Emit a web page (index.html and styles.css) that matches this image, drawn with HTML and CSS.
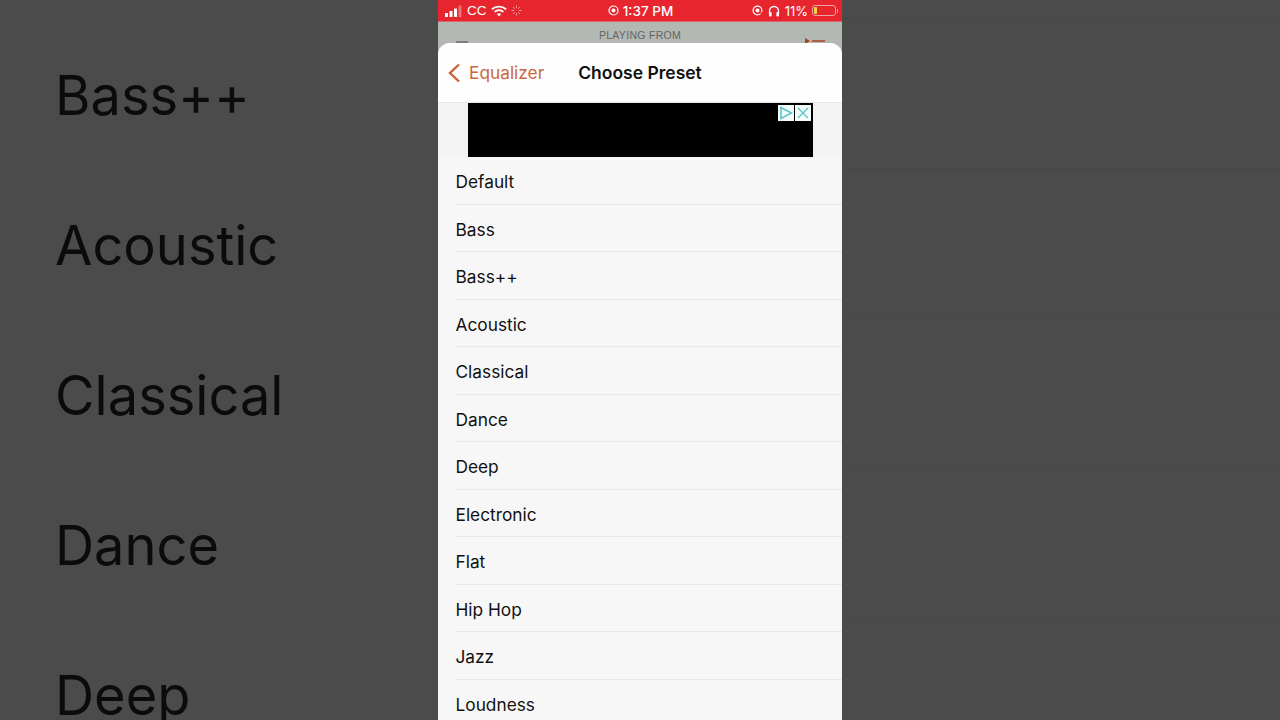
FILE: index.html
```html
<!DOCTYPE html>
<html lang="en">
<head>
    <meta charset="UTF-8">
    <meta name="viewport" content="width=device-width, initial-scale=1.0">
    <title>Choose Preset</title>
    <link rel="stylesheet" href="styles.css">
</head>
<body>
    <div class="stage">
        <!-- Zoomed copy of the list on the left -->
        <div class="side side-left">
            <div class="side-row">Bass++</div>
            <div class="side-row">Acoustic</div>
            <div class="side-row">Classical</div>
            <div class="side-row">Dance</div>
            <div class="side-row">Deep</div>
        </div>

        <div class="phone">
            <div class="status-bar">
                <div class="status-left">
                    <svg class="signal" width="20" height="12" viewBox="0 0 20 12">
                        <rect x="0" y="8" width="3" height="4" rx="0.5" fill="#fff"/>
                        <rect x="4.5" y="6" width="3" height="6" rx="0.5" fill="#fff"/>
                        <rect x="9" y="3.5" width="3" height="8.5" rx="0.5" fill="#fff"/>
                        <rect x="13.5" y="0.5" width="3" height="11.5" rx="0.5" fill="#fff" opacity="0.35"/>
                    </svg>
                    <span class="carrier">CC</span>
                    <svg class="wifi" width="16" height="12" viewBox="0 0 17 12">
                        <path d="M1 4.2 C5.2 0.4 11.8 0.4 16 4.2" fill="none" stroke="#fff" stroke-width="2"/>
                        <path d="M3.8 6.9 C6.5 4.6 10.5 4.6 13.2 6.9" fill="none" stroke="#fff" stroke-width="2"/>
                        <path d="M6.2 9.3 C7.6 8.2 9.4 8.2 10.8 9.3 L8.5 11.8 Z" fill="#fff"/>
                    </svg>
                    <svg class="spinner" width="11" height="11" viewBox="0 0 11 11" stroke="#fff" stroke-width="1" opacity="0.55">
                        <path d="M5.5 0.5V3M5.5 8V10.5M0.5 5.5H3M8 5.5H10.5M2 2L3.7 3.7M7.3 7.3L9 9M2 9L3.7 7.3M7.3 3.7L9 2"/>
                    </svg>
                </div>
                <div class="status-time">
                    <svg width="11" height="11" viewBox="0 0 11 11">
                        <circle cx="5.5" cy="5.5" r="4.5" fill="none" stroke="#fff" stroke-width="1.2"/>
                        <circle cx="5.5" cy="5.5" r="2" fill="#fff"/>
                    </svg>
                    <span>1:37 PM</span>
                </div>
                <div class="status-right">
                    <svg width="11" height="11" viewBox="0 0 11 11">
                        <circle cx="5.5" cy="5.5" r="4.4" fill="none" stroke="#fff" stroke-width="1.2"/>
                        <circle cx="5.5" cy="5.5" r="2" fill="#fff"/>
                        <path d="M8 8.2 L10.8 6.8 L10.8 10 Z" fill="#e6252f"/>
                    </svg>
                    <svg width="12" height="12" viewBox="0 0 12 12">
                        <path d="M1.5 8 V6 A4.5 4.5 0 0 1 10.5 6 V8" fill="none" stroke="#fff" stroke-width="1.4"/>
                        <rect x="1" y="7" width="2.6" height="4.5" rx="1" fill="#fff"/>
                        <rect x="8.4" y="7" width="2.6" height="4.5" rx="1" fill="#fff"/>
                    </svg>
                    <span class="battery-text">11%</span>
                    <div class="battery"><div class="battery-level"></div></div>
                    <div class="battery-tip"></div>
                </div>
            </div>

            <div class="now-playing">
                <span class="now-playing-label">PLAYING FROM</span>
                <span class="back-hint"></span>
                <svg class="queue-icon" width="22" height="12" viewBox="0 0 22 12">
                    <path d="M1 1 L6 4 L1 7 Z" fill="#a8431f"/>
                    <path d="M8 4 H21 M1 10 H21" stroke="#a8431f" stroke-width="1.5"/>
                </svg>
            </div>

            <div class="sheet">
                <div class="sheet-header">
                    <a class="back-link">
                        <svg width="14" height="20" viewBox="0 0 14 20">
                            <path d="M12 1.5 L3 10 L12 18.5" fill="none" stroke="#c8623a" stroke-width="2.4"/>
                        </svg>
                        <span>Equalizer</span>
                    </a>
                    <div class="sheet-title">Choose Preset</div>
                </div>

                <div class="ad-band">
                    <div class="ad">
                        <div class="ad-btn">
                            <svg width="14" height="14" viewBox="0 0 14 14">
                                <path d="M2 1.5 L12.5 7 L2 12.5 Z" fill="none" stroke="#5cc5c8" stroke-width="1.6"/>
                            </svg>
                        </div>
                        <div class="ad-btn">
                            <svg width="14" height="14" viewBox="0 0 14 14">
                                <path d="M2 2 L12 12 M12 2 L2 12" stroke="#5cc5c8" stroke-width="1.4"/>
                            </svg>
                        </div>
                    </div>
                </div>

                <div class="preset-list">
                    <div class="preset-row">Default</div>
                    <div class="preset-row">Bass</div>
                    <div class="preset-row">Bass++</div>
                    <div class="preset-row">Acoustic</div>
                    <div class="preset-row">Classical</div>
                    <div class="preset-row">Dance</div>
                    <div class="preset-row">Deep</div>
                    <div class="preset-row">Electronic</div>
                    <div class="preset-row">Flat</div>
                    <div class="preset-row">Hip Hop</div>
                    <div class="preset-row">Jazz</div>
                    <div class="preset-row">Loudness</div>
                </div>
            </div>
        </div>

        <div class="side side-right">
            <div class="side-line"></div>
            <div class="side-line"></div>
            <div class="side-line"></div>
            <div class="side-line"></div>
            <div class="side-line"></div>
        </div>
    </div>
</body>
</html>
```

FILE: styles.css
```css
html, body {
    margin: 0;
    padding: 0;
    height: 100%;
    overflow: hidden;
}
body {
    font-family: Inter, "Liberation Sans", Arial, sans-serif;
    background-color: #4b4b4b;
    color: #111;
}
.stage {
    display: flex;
    width: 1280px;
    height: 720px;
    overflow: hidden;
}

/* Dimmed side panels */
.side {
    width: 438px;
    flex-shrink: 0;
    box-sizing: border-box;
    background-color: #4b4b4b;
    overflow: hidden;
}
.side-left {
    padding-top: 15px;
    padding-left: 55px;
}
.side-row {
    height: 150px;
    box-sizing: border-box;
    line-height: 160px;
    font-size: 54.2px;
    color: #0b0b0b;
    filter: blur(0.6px);
    border-bottom: 1px solid #494949;
}
.side-right {
    padding-top: 18px;
}
.side-line {
    height: 150px;
    box-sizing: border-box;
    border-top: 1px solid #474747;
}

/* Phone column */
.phone {
    width: 404px;
    flex-shrink: 0;
    height: 720px;
    display: flex;
    flex-direction: column;
    background-color: #b4b8b3;
    overflow: hidden;
}
.status-bar {
    height: 22px;
    flex-shrink: 0;
    background-color: #e6252f;
    color: #fff;
    display: grid;
    grid-template-columns: 1fr auto 1fr;
    align-items: center;
    font-size: 13px;
    padding: 0 0 0 7px;
    box-sizing: border-box;
    border-bottom: 1px solid #d8636a;
}
.status-left {
    display: flex;
    align-items: center;
    font-family: "Liberation Sans", Arial, sans-serif;
}
.carrier {
    margin-left: 2px;
    margin-right: 4px;
    font-size: 13.5px;
}
.spinner {
    margin-left: 4px;
}
.status-time {
    display: flex;
    align-items: center;
    gap: 4px;
    margin-right: 6px;
    font-weight: 500;
    font-size: 13.5px;
}
.status-right {
    display: flex;
    align-items: center;
    justify-content: flex-end;
    gap: 5px;
    padding-right: 4px;
    font-size: 13px;
}
.battery {
    width: 20px;
    height: 7px;
    margin-left: -1px;
    border: 1px solid #f0a0a0;
    border-radius: 3px;
    padding: 1px;
}
.battery-level {
    width: 3px;
    height: 7px;
    background-color: #f6d43c;
    border-radius: 1px;
}
.battery-tip {
    width: 1px;
    height: 4px;
    margin-left: -4px;
    background-color: #f0a0a0;
}
.now-playing {
    height: 21px;
    flex-shrink: 0;
    position: relative;
    text-align: center;
    overflow: hidden;
}
.now-playing-label {
    display: block;
    font-family: "Liberation Sans", Arial, sans-serif;
    font-size: 10.5px;
    line-height: 27px;
    letter-spacing: 0.3px;
    color: #626664;
}
.queue-icon {
    position: absolute;
    right: 16px;
    top: 15px;
}
.back-hint {
    position: absolute;
    left: 18px;
    top: 19px;
    width: 12px;
    height: 2px;
    background-color: #7c7e7c;
}

/* Sheet */
.sheet {
    flex: 1;
    min-height: 0;
    background-color: #f7f7f7;
    border-radius: 12px 12px 0 0;
    overflow: hidden;
}
.sheet-header {
    height: 60px;
    background-color: #fefefe;
    position: relative;
    display: flex;
    align-items: center;
    justify-content: center;
    box-sizing: border-box;
    border-bottom: 1px solid #e8e8e8;
}
.back-link {
    position: absolute;
    left: 9px;
    top: 20px;
    display: flex;
    align-items: center;
    gap: 8px;
    color: #c8683c;
    font-size: 17.3px;
    line-height: 20px;
}
.sheet-title {
    font-weight: 600;
    font-size: 17.5px;
    line-height: 22px;
    padding-top: 1px;
    color: #111;
}
.ad-band {
    height: 54px;
    background-color: #f3f3f3;
    display: flex;
    justify-content: center;
}
.ad {
    width: 345px;
    height: 54px;
    background-color: #000;
    display: flex;
    justify-content: flex-end;
    gap: 1px;
    box-sizing: border-box;
    padding: 2px 1.5px 0 0;
}
.ad-btn {
    width: 16px;
    height: 16px;
    background-color: #f4fbfb;
    display: flex;
    align-items: center;
    justify-content: center;
}
.preset-row {
    height: 47.5px;
    line-height: 49px;
    margin-left: 17.5px;
    box-sizing: border-box;
    font-size: 17.3px;
    color: #111;
    border-bottom: 1px solid #e9e9e9;
}
```
